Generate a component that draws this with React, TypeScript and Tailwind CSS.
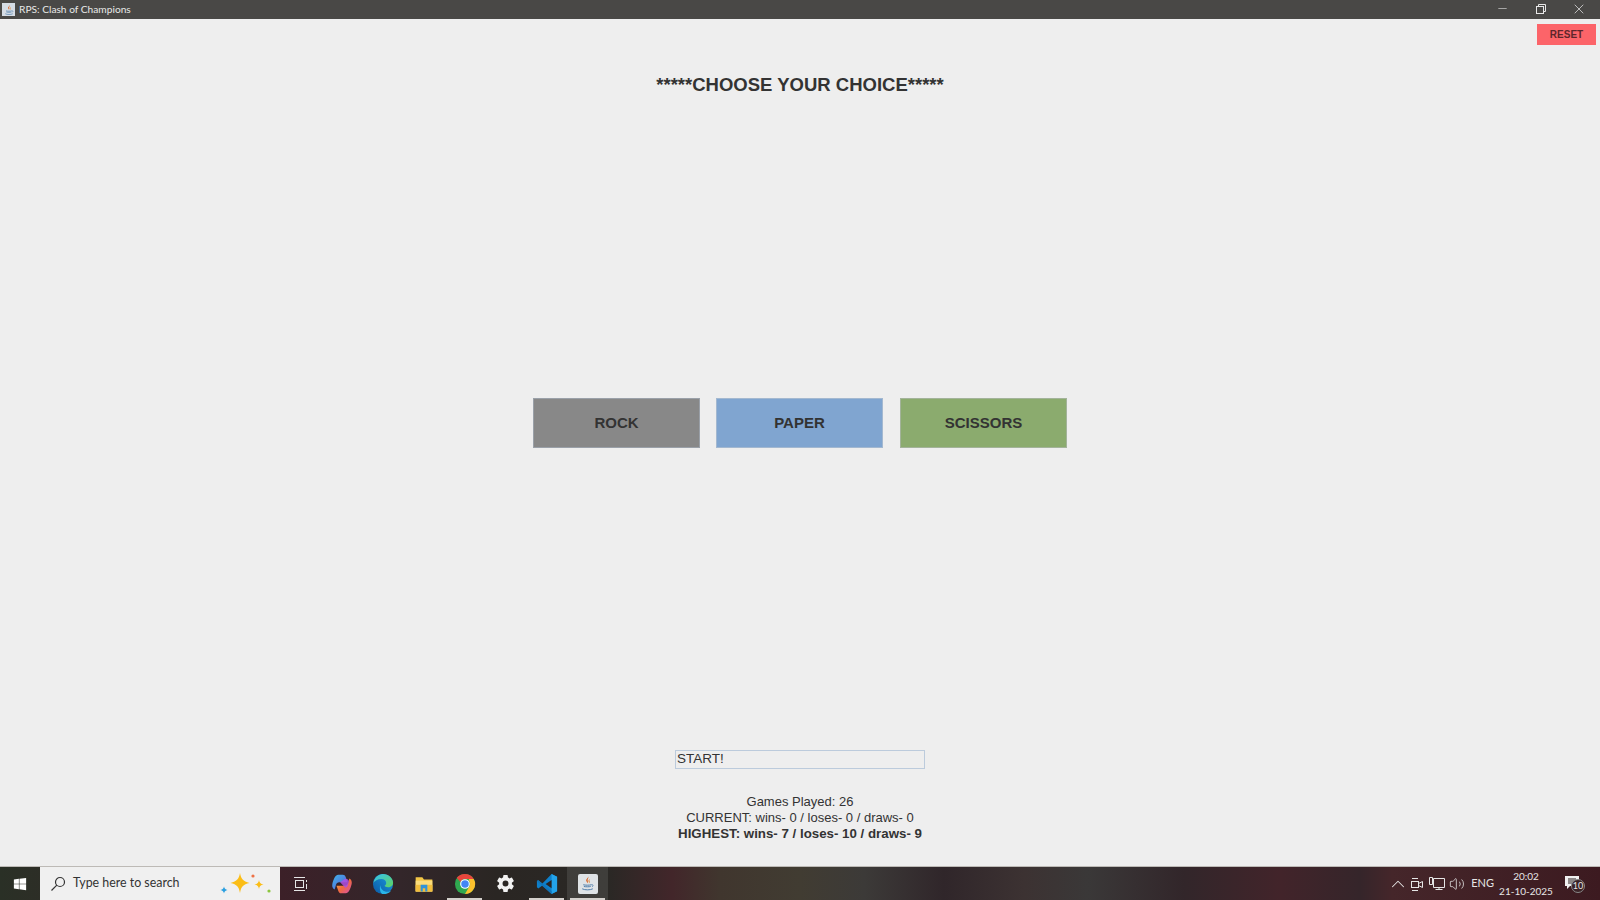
import { ChevronUp, Minus, Volume2, X } from 'lucide-react';
import { FaWindows } from 'react-icons/fa';
import { IoSettingsSharp } from 'react-icons/io5';

const ARIAL = "font-['Liberation_Sans',Arial,sans-serif]";
const SEGOE = "font-['Lato','Open_Sans',sans-serif]";

function JavaIcon({ size }: { size: number }) {
  return (
    <svg width={size} height={size} viewBox="0 0 16 16" fill="none">
      <path d="M8.500 1c.8 1.600-2.200 2.800-1.700 4.400.3 1 1.100 1.500 1.100 2.400 1-1 .3-1.900.2-2.800-.1-1.300 1.400-2.200.4-4z" fill="#d9662a" />
      <path d="M10.500 3.500c-1.500 1-2 1.800-1.300 3 .3.500.3 1 0 1.400 1.200-.7 1.100-1.500.7-2.300-.3-.7 0-1.300.6-2.100z" fill="#e08a3c" />
      <path d="M4 9.200c1.800.5 6 .5 7.600 0M4.600 10.800c1.500.4 5 .4 6.400 0M3 13c2.500 1.300 7.500 1.300 10 0" stroke="#4a7aa8" strokeWidth="0.900" />
      <path d="M11.600 9.200c1.500-.5 2.400.8.600 2" stroke="#4a7aa8" strokeWidth="0.800" />
    </svg>
  );
}

function CopilotIcon() {
  return (
    <svg width="22" height="22" viewBox="0 0 24 24">
      <defs>
        <linearGradient id="cop1" x1="0" y1="0" x2="1" y2="1">
          <stop offset="0" stopColor="#3fb6e8" />
          <stop offset="1" stopColor="#5a56d8" />
        </linearGradient>
        <linearGradient id="cop2" x1="0" y1="0" x2="1" y2="1">
          <stop offset="0" stopColor="#f6c342" />
          <stop offset="0.5" stopColor="#f0693e" />
          <stop offset="1" stopColor="#d84fb0" />
        </linearGradient>
      </defs>
      <path d="M8 2h5c1.500 0 2.400.8 2.900 2.200L18 10H9c-2 0-3 1-3.600 3L4 18c-2-1-3-3-2.600-5.500C2 9 4 4 5.500 3c.8-.7 1.600-1 2.500-1z" fill="url(#cop1)" />
      <path d="M16 22h-5c-1.500 0-2.400-.8-2.900-2.200L6 14h9c2 0 3-1 3.600-3L20 6c2 1 3 3 2.600 5.500C22 15 20 20 18.500 21c-.8.700-1.600 1-2.500 1z" fill="url(#cop2)" />
      <path d="M15 6.500c2.500-.5 4 .5 4.500 2.500l-1 4.500c-.5 1.500-1.500 2-3 2.500L10 10z" fill="#b04fe0" opacity="0.85" />
    </svg>
  );
}

function EdgeIcon() {
  return (
    <svg width="22" height="22" viewBox="0 0 24 24">
      <defs>
        <linearGradient id="edge1" x1="0" y1="1" x2="1" y2="0">
          <stop offset="0" stopColor="#0c59a4" />
          <stop offset="1" stopColor="#1b9de2" />
        </linearGradient>
        <linearGradient id="edge2" x1="0" y1="0" x2="1" y2="1">
          <stop offset="0" stopColor="#35c1f1" />
          <stop offset="1" stopColor="#5fd35f" />
        </linearGradient>
      </defs>
      <circle cx="12" cy="12" r="11" fill="url(#edge1)" />
      <path d="M1.500 11C2.500 5 7 1 12 1c6 0 11 4.500 11 9.500 0 3-2.500 5-5.500 5-2 0-3.500-.7-3.800-1.500 1.300-.8 1.800-2 1.800-3.200C15.500 8 13 6.500 10.500 6.500 6 6.500 2.800 8.500 1.500 11z" fill="url(#edge2)" />
      <path d="M9 13c0 4 3.500 7.500 8 7.500 1.500 0 3-.5 4-1.200-2 2.700-5.300 3.700-8.500 3.700C9 23 8 17 9 13z" fill="#2ab5e8" />
    </svg>
  );
}

function FolderIcon() {
  return (
    <svg width="20" height="20" viewBox="0 0 24 24">
      <path d="M2 4h8l2 2.500h10V21H2z" fill="#f3c746" />
      <path d="M2 8h20v13H2z" fill="#fadc7b" />
      <path d="M2 13h20v8H2z" fill="#f1bd3d" />
      <path d="M8 13h8v8h-2.500v-4h-3v4H8z" fill="#2f93d8" />
    </svg>
  );
}

function ChromeIcon() {
  return (
    <svg width="22" height="22" viewBox="0 0 24 24">
      <circle cx="12" cy="12" r="11" fill="#2fa84f" />
      <path d="M12 1a11 11 0 0 1 9.530 5.500H12a5.500 5.500 0 0 0-5 3.200L3 5.200A11 11 0 0 1 12 1z" fill="#e8453c" />
      <path d="M21.530 6.500A11 11 0 0 1 12 23l4.700-8.200A5.500 5.500 0 0 0 16.700 9l-.6-2.500z" fill="#fbc02d" />
      <circle cx="12" cy="12" r="5.300" fill="#fff" />
      <circle cx="12" cy="12" r="4.100" fill="#4285f4" />
    </svg>
  );
}

function VsCodeIcon() {
  return (
    <svg width="22" height="22" viewBox="0 0 24 24">
      <path d="M17 1l6 3v16l-6 3-10-9.500-4.500 3.500L1 15.500v-7L2.500 8 7 11.500z" fill="#0e7fc9" />
      <path d="M17 1l6 3v16l-6 3z" fill="#23a3ea" />
      <path d="M17 7.500L10.500 12l6.500 4.500z" fill="#2a2423" />
      <path d="M2.500 8L17 20v3L1 9z" fill="#1174b8" />
    </svg>
  );
}

function SearchSparkle() {
  return (
    <svg width="56" height="24" viewBox="0 0 56 24">
      <path d="M24 1c1 6 3 8 9.500 10-6.500 1.500-8.500 4-9.500 10-1-6-3-8.500-9.500-10 6.500-2 8.500-4 9.500-10z" fill="#fbbd16" />
      <path d="M43 8c.4 2.800 1.500 3.800 4.500 4.500-3 .7-4.100 1.700-4.500 4.500-.4-2.800-1.500-3.800-4.500-4.500 3-.7 4.100-1.700 4.500-4.500z" fill="#fbbd16" />
      <path d="M8 14.500c.4 2 1.200 2.900 3.500 3.500-2.300.6-3.100 1.500-3.500 3.500-.4-2-1.200-2.900-3.500-3.500 2.300-.6 3.100-1.500 3.500-3.500z" fill="#2a9fe0" />
      <circle cx="37" cy="4" r="1.600" fill="#ee7246" />
      <circle cx="53" cy="19" r="1.600" fill="#8cc63f" />
    </svg>
  );
}

function TaskButton({ children, underline, active }: { children: React.ReactNode; underline?: boolean; active?: boolean }) {
  return (
    <div className={`relative flex h-full w-[41px] items-center justify-center ${active ? 'bg-white/10' : ''}`}>
      {children}
      {underline && <div className="absolute bottom-0 left-[3px] right-[3px] h-[2px] bg-[#d4d0cc]" />}
    </div>
  );
}

export default function App() {
  return (
    <div className={`flex h-screen w-full flex-col overflow-hidden bg-[#eeeeee] ${ARIAL}`}>
      {/* window title bar */}
      <div className="flex h-[19px] shrink-0 items-center bg-[#494846] text-[#e8e8e8]">
        <div className="ml-[2px] flex h-[13px] w-[13px] items-center justify-center bg-[#d5dce4]">
          <JavaIcon size={12} />
        </div>
        <span className={`ml-[4px] text-[10.200px] ${SEGOE}`}>RPS: Clash of Champions</span>
        <div className="ml-auto flex items-center pb-[2px]">
          <Minus size={13} strokeWidth={1.1} className="mr-[27px]" />
          <svg width="10" height="10" viewBox="0 0 10 10" fill="none" stroke="#e8e8e8" className="mr-[25px]">
            <rect x="0.500" y="2.500" width="7" height="7" />
            <path d="M2.500 2.500v-2h7v7h-2" />
          </svg>
          <X size={16} strokeWidth={1.1} className="mr-[13px]" />
        </div>
      </div>

      {/* game panel */}
      <div className="flex min-h-0 flex-1 flex-col items-center">
        <div className="flex w-full justify-end pr-[4px] pt-[5px]">
          <button className="h-[21px] w-[59px] bg-[#fc6469] text-[10px] font-bold text-[#5e262b]">RESET</button>
        </div>
        <h1 className="mt-[28px] text-[18.500px] leading-[23px] font-bold text-[#333333]">*****CHOOSE YOUR CHOICE*****</h1>

        <div className="mt-[302px] flex">
          <button className="h-[50px] w-[167px] border border-[#9aa0a8] bg-[#888888] text-[15px] font-bold text-[#333333]">ROCK</button>
          <button className="ml-[16px] h-[50px] w-[167px] border border-[#a3b8d0] bg-[#80a5d0] text-[15px] font-bold text-[#333333]">PAPER</button>
          <button className="ml-[17px] h-[50px] w-[167px] border border-[#a3b39a] bg-[#8bab6e] text-[15px] font-bold text-[#333333]">SCISSORS</button>
        </div>

        <div className="mt-[302px] flex h-[19px] w-[250px] items-center border border-[#bccbdc] px-[1px] text-[13.500px] text-[#333333]">START!</div>

        <div className="mt-[25px] flex flex-col items-center text-[13px] leading-[16px] text-[#333333]">
          <span>Games Played: 26</span>
          <span>CURRENT: wins- 0 / loses- 0 / draws- 0</span>
          <span className="text-[13.300px] font-bold">HIGHEST: wins- 7 / loses- 10 / draws- 9</span>
        </div>
      </div>

      {/* windows taskbar */}
      <div className={`flex h-[34px] shrink-0 items-center border-t border-[#bdbab6] bg-[linear-gradient(90deg,#2a3026_0%,#3c2028_17.500%,#33262a_25%,#2a2623_31%,#2a2825_38%,#42262a_42%,#40362e_45%,#413c32_50%,#3c3a38_54%,#30262a_59%,#3c3232_64%,#3a3838_68%,#32262a_74%,#42242a_80%,#35252a_85%,#45262a_87%,#3c1a20_100%)] text-[#e6e6e6] ${SEGOE}`}>
        <div className="flex h-full w-[40px] items-center justify-center">
          <FaWindows size={14} color="#ffffff" />
        </div>
        <div className="flex h-full w-[240px] items-center bg-[#f0f0f0] pl-[10px] text-[#333333]">
          <svg width="16" height="16" viewBox="0 0 16 16" fill="none" stroke="#333333" strokeWidth="1.200">
            <circle cx="10" cy="6" r="4.500" />
            <path d="M6.800 9.200L1.500 14.500" />
          </svg>
          <span className="ml-[7px] text-[12.400px]">Type here to search</span>
          <div className="ml-auto mr-[8px]">
            <SearchSparkle />
          </div>
        </div>
        <div className="flex h-full items-center">
          <TaskButton>
            <svg width="16" height="16" viewBox="0 0 16 16" fill="none" stroke="#e6e6e6" strokeWidth="1">
              <rect x="2.500" y="4.500" width="8" height="7" />
              <path d="M1 1.500h11M1 14.500h11M13.500 4v2M13.500 8v5" />
            </svg>
          </TaskButton>
          <TaskButton><CopilotIcon /></TaskButton>
          <TaskButton><EdgeIcon /></TaskButton>
          <TaskButton><FolderIcon /></TaskButton>
          <TaskButton underline><ChromeIcon /></TaskButton>
          <TaskButton><IoSettingsSharp size={19} color="#f2f2f2" /></TaskButton>
          <TaskButton underline><VsCodeIcon /></TaskButton>
          <TaskButton underline active>
            <div className="flex h-[20px] w-[20px] items-center justify-center rounded-[2px] bg-[#dfe3e6]">
              <JavaIcon size={17} />
            </div>
          </TaskButton>
        </div>
        <div className="ml-auto flex h-full items-center">
          <ChevronUp size={22} strokeWidth={1.1} className="-mx-[3px]" />
          <svg width="14" height="16" viewBox="0 0 14 16" fill="none" stroke="#e6e6e6" className="ml-[4px]">
            <rect x="1.500" y="5.500" width="7" height="6" />
            <path d="M8.500 7.500l4-2v6l-4-2M2 2.500h6M2 14.500h6" />
          </svg>
          <svg width="16" height="15" viewBox="0 0 16 15" fill="none" stroke="#e6e6e6" className="ml-[5px]">
            <path d="M4.500 2.500h11v9h-11zM10 11.500v2M6.500 13.500h7M.5 1.500h3v7h-3z" />
          </svg>
          <Volume2 size={16} strokeWidth={1.2} className="ml-[4px]" />
          <span className="ml-[6px] text-[11px]">ENG</span>
          <div className="ml-[5px] flex w-[54px] flex-col items-center whitespace-nowrap text-[10px] leading-[15px]">
            <span>20:02</span>
            <span>21-10-2025</span>
          </div>
          <div className="relative ml-[12px] mr-[17px] h-[16px] w-[18px]">
            <svg width="14" height="13" viewBox="0 0 14 13" fill="#f0f0f0">
              <path d="M0 0h14v10H5l-3 3v-3H0z" />
              <path d="M3 3h8M3 5h8M3 7h8" stroke="#2a2020" strokeWidth="1" />
            </svg>
            <div className="absolute left-[6px] top-[3px] flex h-[14px] w-[14px] items-center justify-center rounded-full border border-[#888] bg-[#3a2226] text-[9px]">10</div>
          </div>
        </div>
      </div>
    </div>
  );
}
